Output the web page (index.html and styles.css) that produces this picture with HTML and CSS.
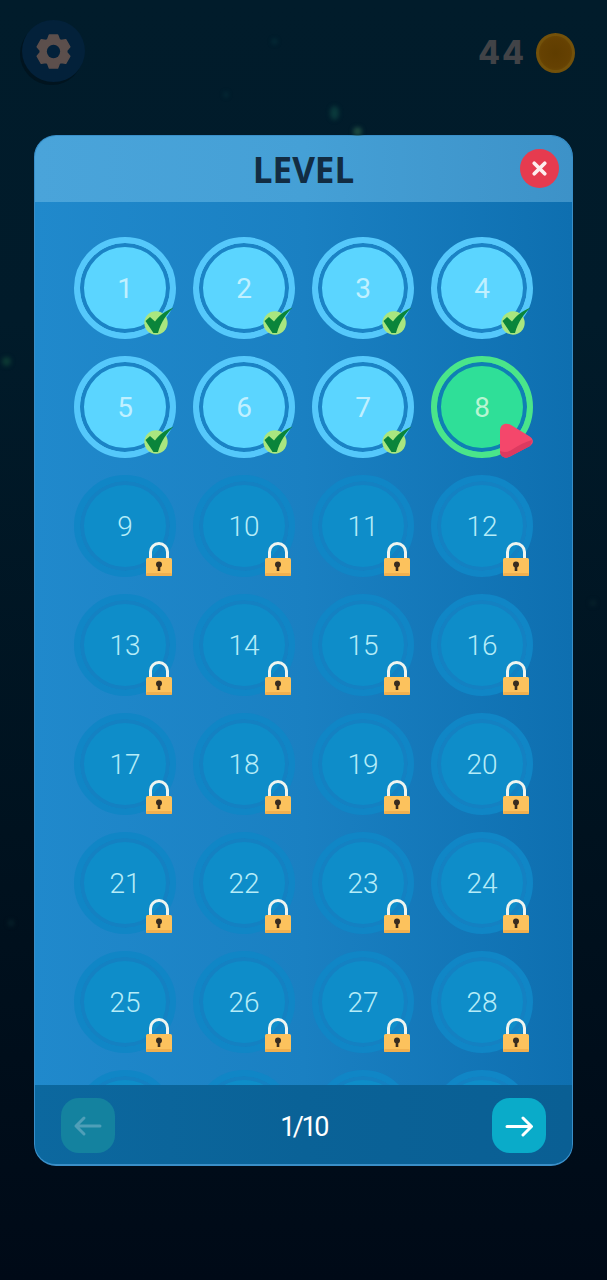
FILE: index.html
```html
<!DOCTYPE html>
<html>
<head>
    <title>Level</title>
    <link rel="stylesheet" href="styles.css">
</head>
<body>
    <svg class="defs" width="0" height="0">
        <symbol id="check" viewBox="0 0 30 30">
            <circle cx="12" cy="17" r="11.700" fill="#a9e67f"/>
            <path d="M1.500 15L6 11 11 15.500C15 10 21 5 29.500 1.500 23 8 17 16 14 27H9.500z" fill="#0a853b"/>
        </symbol>
        <symbol id="lock" viewBox="0 0 26 34">
            <path d="M4.500 17V10a8.500 8.500 0 0 1 17 0v7" fill="none" stroke="#eef5f0" stroke-width="3"/>
            <rect y="16" width="26" height="18" rx="1.500" fill="#fcc25d"/>
            <rect y="31" width="26" height="3" rx="1.500" fill="#f0b04f"/>
            <circle cx="13" cy="22.500" r="3" fill="#3a2d1f"/>
            <rect x="11.700" y="23" width="2.600" height="6" fill="#3a2d1f"/>
        </symbol>
        <symbol id="play" viewBox="0 0 33 36">
            <path d="M0 8C0 1 6-1 11 2l18 11c5 3 5 7 1 10L11 33C5 37 0 33 0 28z" fill="#f4476b"/>
            <path d="M32 17c0 2-1 4-2 6L11 33C5 37 0 33 0 28c5 2 9 1 13-2 6-4 12-7 19-9z" fill="#dc3a60"/>
        </symbol>
    </svg>

    <div class="stars">
        <i class="star s1"></i>
        <i class="star s2"></i>
        <i class="star s3"></i>
        <i class="star s4"></i>
        <i class="star s5"></i>
        <i class="star s6"></i>
        <i class="star s7"></i>
    </div>

    <div class="topbar">
        <div class="settings">
            <svg class="gear" viewBox="0 0 24 24">
                <path fill="#5c4f4c" stroke="#5c4f4c" stroke-linejoin="round" d="M9.340 1.330H14.660L15.770 4.270 16.810 4.870 19.910 4.360 22.570 8.970 20.580 11.400V12.600L22.570 15.030 19.910 19.640 16.810 19.130 15.770 19.730 14.660 22.670H9.340L8.230 19.730 7.190 19.130 4.090 19.640 1.430 15.030 3.420 12.600V11.400L1.430 8.970 4.090 4.360 7.190 4.870 8.230 4.270z"/>
                <circle cx="12" cy="12" r="4.300" fill="#03213a"/>
            </svg>
        </div>
        <div class="coins">
            <span class="coin-count">44</span>
            <span class="coin"></span>
        </div>
    </div>

    <div class="panel">
        <div class="panel-head">
            <h1>LEVEL</h1>
            <div class="close">
                <svg viewBox="0 0 20 20"><path d="M5 5l10 10M15 5L5 15" stroke="#fdeeee" stroke-width="3.600" stroke-linecap="round"/></svg>
            </div>
        </div>

        <div class="panel-body">
            <div class="grid">
                <div class="level done">1<svg class="badge-check"><use href="#check"/></svg></div>
                <div class="level done">2<svg class="badge-check"><use href="#check"/></svg></div>
                <div class="level done">3<svg class="badge-check"><use href="#check"/></svg></div>
                <div class="level done">4<svg class="badge-check"><use href="#check"/></svg></div>
                <div class="level done">5<svg class="badge-check"><use href="#check"/></svg></div>
                <div class="level done">6<svg class="badge-check"><use href="#check"/></svg></div>
                <div class="level done">7<svg class="badge-check"><use href="#check"/></svg></div>
                <div class="level current">8<svg class="badge-play"><use href="#play"/></svg></div>
                <div class="level locked">9<svg class="badge-lock"><use href="#lock"/></svg></div>
                <div class="level locked">10<svg class="badge-lock"><use href="#lock"/></svg></div>
                <div class="level locked">11<svg class="badge-lock"><use href="#lock"/></svg></div>
                <div class="level locked">12<svg class="badge-lock"><use href="#lock"/></svg></div>
                <div class="level locked">13<svg class="badge-lock"><use href="#lock"/></svg></div>
                <div class="level locked">14<svg class="badge-lock"><use href="#lock"/></svg></div>
                <div class="level locked">15<svg class="badge-lock"><use href="#lock"/></svg></div>
                <div class="level locked">16<svg class="badge-lock"><use href="#lock"/></svg></div>
                <div class="level locked">17<svg class="badge-lock"><use href="#lock"/></svg></div>
                <div class="level locked">18<svg class="badge-lock"><use href="#lock"/></svg></div>
                <div class="level locked">19<svg class="badge-lock"><use href="#lock"/></svg></div>
                <div class="level locked">20<svg class="badge-lock"><use href="#lock"/></svg></div>
                <div class="level locked">21<svg class="badge-lock"><use href="#lock"/></svg></div>
                <div class="level locked">22<svg class="badge-lock"><use href="#lock"/></svg></div>
                <div class="level locked">23<svg class="badge-lock"><use href="#lock"/></svg></div>
                <div class="level locked">24<svg class="badge-lock"><use href="#lock"/></svg></div>
                <div class="level locked">25<svg class="badge-lock"><use href="#lock"/></svg></div>
                <div class="level locked">26<svg class="badge-lock"><use href="#lock"/></svg></div>
                <div class="level locked">27<svg class="badge-lock"><use href="#lock"/></svg></div>
                <div class="level locked">28<svg class="badge-lock"><use href="#lock"/></svg></div>
                <div class="level locked"></div>
                <div class="level locked"></div>
                <div class="level locked"></div>
                <div class="level locked"></div>
            </div>
        </div>

        <div class="panel-foot">
            <div class="nav nav-prev">
                <svg viewBox="0 0 30 30"><path d="M27 15H3M11 7l-8 8 8 8" fill="none" stroke="#4f9fb8" stroke-width="3" stroke-linecap="round" stroke-linejoin="round"/></svg>
            </div>
            <span class="page">1/10</span>
            <div class="nav nav-next">
                <svg viewBox="0 0 30 30"><path d="M3 15.500H27M19 7l8.500 8.500L19 24" fill="none" stroke="#fff" stroke-width="3" stroke-linecap="round" stroke-linejoin="round"/></svg>
            </div>
        </div>
    </div>
</body>
</html>
```

FILE: styles.css
```css
html, body {
    margin: 0;
    padding: 0;
}
body {
    position: relative;
    width: 607px;
    height: 1280px;
    overflow: hidden;
    background: linear-gradient(180deg, #011c2b 0%, #011b2a 25%, #00121f 65%, #000a17 100%);
    font-family: Roboto, "Liberation Sans", sans-serif;
}
.defs {
    position: absolute;
}

/* fondo */
.star {
    position: absolute;
    width: 6px;
    height: 6px;
    border-radius: 50%;
    background: #0a3a3c;
    filter: blur(2px);
}
.s1 { left: 330px; top: 106px; width: 9px; height: 14px; }
.s2 { left: 353px; top: 127px; width: 9px; height: 9px; background: #1d4a40; }
.s3 { left: 272px; top: 39px; width: 5px; height: 5px; background: #06303a; }
.s4 { left: 224px; top: 92px; width: 4px; height: 5px; background: #06303a; }
.s5 { left: 2px; top: 357px; width: 9px; height: 9px; background: #0c3a34; }
.s6 { left: 8px; top: 920px; background: #07222b; }
.s7 { left: 590px; top: 600px; background: #07222b; }

/* barra superior */
.topbar {
    display: flex;
    justify-content: space-between;
    height: 135px;
    box-sizing: border-box;
    padding: 20px 32px 0 22px;
}
.settings {
    display: flex;
    align-items: center;
    justify-content: center;
    width: 63px;
    height: 62px;
    border-radius: 50%;
    background: #03213a;
    box-shadow: -2px 3px 0 #01141f;
}
.gear {
    width: 37px;
    height: 39px;
}
.coins {
    display: flex;
    align-items: flex-start;
    gap: 10px;
    padding-top: 13px;
}
.coin-count {
    font-family: Inter, sans-serif;
    font-size: 32px;
    font-weight: 800;
    line-height: 40px;
    letter-spacing: 2px;
    color: #414347;
}
.coin {
    width: 39px;
    height: 40px;
    box-sizing: border-box;
    border-radius: 50%;
    background: radial-gradient(circle, #5f3d00 0%, #654102 60%, #70500a 100%);
    border: 3px solid #73510a;
}

/* panel */
.panel {
    width: 539px;
    height: 1031px;
    margin-left: 34px;
    box-sizing: border-box;
    border: 1px solid #3a8fc8;
    border-bottom-width: 2px;
    border-radius: 22px;
    overflow: hidden;
    background: linear-gradient(90deg, #2089cc 0%, #1a80c2 50%, #0e6fb0 100%);
}
.panel-head {
    position: relative;
    display: flex;
    align-items: center;
    justify-content: center;
    height: 66px;
    background: linear-gradient(90deg, #4aa4da 0%, #45a0d6 50%, #3d92c8 100%);
}
.panel-head h1 {
    margin: 0;
    font-family: "Open Sans", sans-serif;
    font-size: 35px;
    font-weight: 700;
    color: #122c42;
}
.close {
    position: absolute;
    right: 13px;
    top: 13px;
    width: 39px;
    height: 39px;
    border-radius: 50%;
    background: #e63b4f;
}
.close svg {
    display: block;
    width: 39px;
    height: 39px;
    padding: 9px;
    box-sizing: border-box;
}
.panel-body {
    height: 883px;
    box-sizing: border-box;
    padding: 35px 0 0 39px;
    overflow: hidden;
}
.grid {
    display: grid;
    grid-template-columns: repeat(4, 102px);
    grid-auto-rows: 102px;
    gap: 17px;
}

/* botones de nivel */
.level {
    position: relative;
    display: flex;
    align-items: center;
    justify-content: center;
    box-sizing: border-box;
    border-radius: 50%;
    border: 6px solid;
    padding-top: 1px;
    font-size: 28px;
    font-weight: 400;
}
.done {
    border-color: #55c8fb;
    background: #5bd5ff;
    box-shadow: inset 0 0 0 4px #1b83c5;
    color: #c0f0ff;
}
.current {
    border-color: #4ae58a;
    background: #2fdf98;
    box-shadow: inset 0 0 0 4px #0f7fb4;
    color: #b8f5d2;
}
.locked {
    border-color: #1086c6;
    background: #0e8dc9;
    box-shadow: inset 0 0 0 4px #1481c2;
    color: #b5ecf8;
    font-weight: 300;
}
.badge-check {
    position: absolute;
    left: 64px;
    top: 63px;
    width: 30px;
    height: 30px;
}
.badge-lock {
    position: absolute;
    left: 66px;
    top: 61px;
    width: 26px;
    height: 34px;
}
.badge-play {
    position: absolute;
    left: 63px;
    top: 61px;
    width: 33px;
    height: 36px;
}

/* pie */
.panel-foot {
    display: flex;
    align-items: center;
    justify-content: space-between;
    height: 79px;
    box-sizing: border-box;
    padding: 2px 26px 0;
    background: linear-gradient(90deg, #0c689f 0%, #0a6297 50%, #0a5f94 100%);
}
.nav {
    display: flex;
    align-items: center;
    justify-content: center;
    width: 54px;
    height: 55px;
    border-radius: 18px;
}
.nav svg {
    width: 30px;
    height: 30px;
}
.nav-prev {
    background: #14829f;
}
.nav-next {
    background: #0aabc9;
}
.page {
    margin-top: 3px;
    font-size: 27px;
    font-weight: 400;
    letter-spacing: -2.500px;
    color: #fff;
}
```
